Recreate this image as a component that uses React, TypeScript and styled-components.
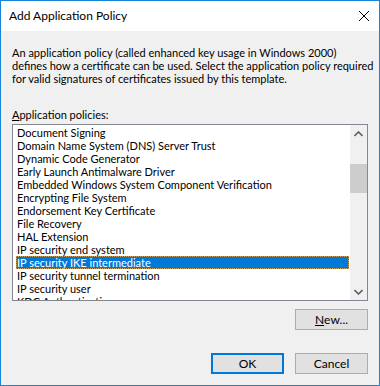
import React from 'react'
import styled, { createGlobalStyle } from 'styled-components'

const GlobalStyle = createGlobalStyle`
    html, body {
        margin: 0;
        padding: 0;
        background: #f0f0f0;
    }
    * {
        box-sizing: border-box;
    }
`

const DialogWindow = styled.div`
    width: 380px;
    height: 386px;
    border: 1px solid #1883d7;
    background: #f0f0f0;
    display: flex;
    flex-direction: column;
    font-family: Lato, "Liberation Sans", sans-serif;
    font-size: 11px;
    color: #000;
    overflow: hidden;
`

const TitleBar = styled.div`
    height: 30px;
    background: #fff;
    display: flex;
    align-items: center;
    justify-content: space-between;
    padding: 0 10px 0 8px;
    flex-shrink: 0;
`

const TitleText = styled.div`
    font-size: 12px;
    line-height: 16px;
    padding-bottom: 1px;
`

const CloseButton = styled.div`
    width: 10px;
    height: 10px;
    display: flex;
`

const Body = styled.div`
    flex: 1;
    padding: 15px 11px 0 11px;
    display: flex;
    flex-direction: column;
`

const DescLine = styled.div`
    line-height: 13px;
    height: 13px;
    white-space: nowrap;
`

const Label = styled.div`
    margin-top: 23px;
    line-height: 13px;
    span {
        text-decoration: underline;
    }
`

const ListBox = styled.div`
    margin-top: 3px;
    height: 177px;
    border: 1px solid #828790;
    background: #fff;
    display: flex;
    overflow: hidden;
`

const ListItems = styled.div`
    flex: 1;
    padding: 1px 1px 0 3px;
    overflow: hidden;
`

const ListItem = styled.div<{ selected?: boolean }>`
    height: 13px;
    line-height: 13px;
    white-space: nowrap;
    padding-left: 1px;
    background: ${({ selected }) => (selected ? '#0078d7' : 'transparent')};
    color: ${({ selected }) => (selected ? '#fff' : '#000')};
    outline: ${({ selected }) => (selected ? '1px dotted #c8a060' : 'none')};
    outline-offset: -1px;
`

const ScrollBar = styled.div`
    width: 17px;
    background: #f0f0f0;
    display: flex;
    flex-direction: column;
    align-items: center;
`

const ScrollArrow = styled.div`
    height: 17px;
    width: 17px;
    display: flex;
    align-items: center;
    justify-content: center;
`

const ScrollTrack = styled.div`
    flex: 1;
    width: 100%;
    padding-top: 22px;
`

const ScrollThumb = styled.div`
    height: 29px;
    width: 100%;
    background: #cdcdcd;
`

const NewRow = styled.div`
    display: flex;
    justify-content: flex-end;
    margin-top: 8px;
`

const Footer = styled.div`
    display: flex;
    justify-content: flex-end;
    gap: 11px;
    margin-top: 23px;
`

const Button = styled.div<{ primary?: boolean }>`
    width: 73px;
    height: 21px;
    display: flex;
    align-items: center;
    justify-content: center;
    background: #e1e1e1;
    border: ${({ primary }) => (primary ? '2px solid #0078d7' : '1px solid #adadad')};
    font-size: 12px;
    line-height: 13px;
    span {
        text-decoration: underline;
    }
`

const policies = [
    'Document Signing',
    'Domain Name System (DNS) Server Trust',
    'Dynamic Code Generator',
    'Early Launch Antimalware Driver',
    'Embedded Windows System Component Verification',
    'Encrypting File System',
    'Endorsement Key Certificate',
    'File Recovery',
    'HAL Extension',
    'IP security end system',
    'IP security IKE intermediate',
    'IP security tunnel termination',
    'IP security user',
    'KDC Authentication',
]

const description = [
    'An application policy (called enhanced key usage in Windows 2000)',
    'defines how a certificate can be used. Select the application policy required',
    'for valid signatures of certificates issued by this template.',
]

const Chevron: React.FC<{ up?: boolean }> = ({ up }) => (
    <svg width="9" height="6" viewBox="0 0 9 6">
        <path
            d={up ? 'M0.5 5 L4.5 1 L8.5 5' : 'M0.5 1 L4.5 5 L8.5 1'}
            fill="none"
            stroke="#606060"
            strokeWidth="1.6"
        />
    </svg>
)

const App: React.FC = () => {
    return (
        <>
            <GlobalStyle />
            <DialogWindow>
                <TitleBar>
                    <TitleText>Add Application Policy</TitleText>
                    <CloseButton>
                        <svg width="10" height="10" viewBox="0 0 10 10">
                            <path d="M0 0 L10 10 M10 0 L0 10" stroke="#000" strokeWidth="1" />
                        </svg>
                    </CloseButton>
                </TitleBar>
                <Body>
                    <div>
                        {description.map((line) => (
                            <DescLine key={line}>{line}</DescLine>
                        ))}
                    </div>
                    <Label>
                        <span>A</span>pplication policies:
                    </Label>
                    <ListBox>
                        <ListItems>
                            {policies.map((p, i) => (
                                <ListItem key={p} selected={i === 10}>
                                    {p}
                                </ListItem>
                            ))}
                        </ListItems>
                        <ScrollBar>
                            <ScrollArrow>
                                <Chevron up />
                            </ScrollArrow>
                            <ScrollTrack>
                                <ScrollThumb />
                            </ScrollTrack>
                            <ScrollArrow>
                                <Chevron />
                            </ScrollArrow>
                        </ScrollBar>
                    </ListBox>
                    <NewRow>
                        <Button>
                            <span>N</span>ew...
                        </Button>
                    </NewRow>
                    <Footer>
                        <Button primary>OK</Button>
                        <Button>Cancel</Button>
                    </Footer>
                </Body>
            </DialogWindow>
        </>
    )
}

export default App
